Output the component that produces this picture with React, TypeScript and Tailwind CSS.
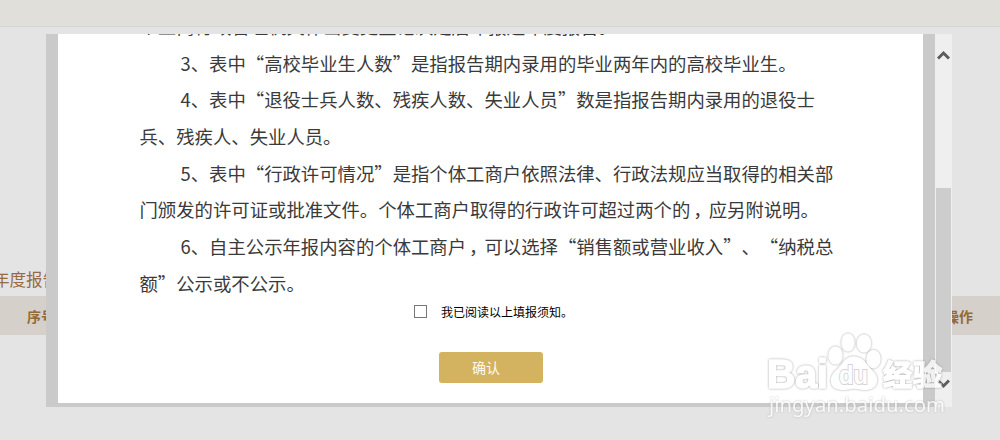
const lines = [
  { text: "个工商行政管理机关作出变更登记决定后年报送年度报告。", indent: false },
  { text: "3、表中“高校毕业生人数”是指报告期内录用的毕业两年内的高校毕业生。", indent: true },
  { text: "4、表中“退役士兵人数、残疾人数、失业人员”数是指报告期内录用的退役士", indent: true },
  { text: "兵、残疾人、失业人员。", indent: false },
  { text: "5、表中“行政许可情况”是指个体工商户依照法律、行政法规应当取得的相关部", indent: true },
  { text: "门颁发的许可证或批准文件。个体工商户取得的行政许可超过两个的，应另附说明。", indent: false },
  { text: "6、自主公示年报内容的个体工商户，可以选择“销售额或营业收入”、“纳税总", indent: true },
  { text: "额”公示或不公示。", indent: false },
];

// commas sit in the middle of their cell
const Line = ({ text }: { text: string }) => {
  const [head, tail] = text.split("，");
  if (!tail) return <>{text}</>;
  return (
    <>
      {head}
      <span className="inline-block translate-x-[3px]">，</span>
      {tail}
    </>
  );
};

const Arrow = ({ className }: { className: string }) => {
  return (
    <svg className={className} width="13" height="10" viewBox="0 0 13 10" fill="none" stroke="#5c5c5c" strokeWidth="3">
      <path d="M1 8.500L6.500 3L12 8.500" />
    </svg>
  );
};

const Watermark = () => {
  return (
    <svg
      className="absolute left-[760px] top-[325px]"
      width="195"
      height="95"
      viewBox="0 0 195 95"
      fill="#fff"
      fontFamily="'Liberation Sans', 'Noto Sans CJK SC', sans-serif"
    >
      <g className="opacity-75 [filter:drop-shadow(0_0_1px_#888)]" stroke="#fff" strokeWidth="1.5">
        <text x="7" y="63" fontSize="41" fontWeight="bold" textLength="61" lengthAdjust="spacingAndGlyphs">
          Bai
        </text>
        <ellipse cx="75.500" cy="30.500" rx="6.500" ry="8.500" />
        <ellipse cx="88" cy="17.500" rx="6" ry="8.500" />
        <ellipse cx="104" cy="18.500" rx="6.500" ry="8.500" />
        <ellipse cx="113.500" cy="34" rx="6.500" ry="8.500" />
        <path d="M94 32C104 32 106 41 112 46C119 52 118 63 108 64C102 65 99 63 94 63C89 63 86 65 80 64C70 63 69 53 76 46C83 41 84 32 94 32Z" />
        <text x="123" y="61" fontSize="29" fontWeight="bold" textLength="59">
          经验
        </text>
      </g>
      <text
        x="79"
        y="59"
        fontSize="25"
        fontWeight="bold"
        textLength="29"
        lengthAdjust="spacingAndGlyphs"
        stroke="#d6d6d6"
        strokeWidth="2"
        paintOrder="stroke"
      >
        du
      </text>
      <text
        className="opacity-80 [filter:drop-shadow(0_0_1px_#aaa)]"
        x="9"
        y="87"
        fontSize="20"
        textLength="176"
        lengthAdjust="spacingAndGlyphs"
        fontFamily="'Noto Sans', sans-serif"
      >
        jingyan.baidu.com
      </text>
    </svg>
  );
};

const App = () => {
  return (
    <div className="relative flex h-[440px] w-[1000px] flex-col overflow-hidden bg-[#e4e4e4] font-['Noto_Sans_CJK_SC',sans-serif]">
      <header className="h-[27px] shrink-0 border-b border-[#d6d5d0] bg-[#e0dfda]" />
      {/* report list behind the dialog */}
      <main className="pt-[238px]">
        <h2 className="-ml-[7px] flex h-[31px] items-center pb-0.5 text-[16.500px] text-[#976a43]">年度报告</h2>
        <div className="flex h-[39px] items-center justify-between bg-[#d6d0ca] px-[27px] pt-px text-[14px] font-bold text-[#936a36]">
          <span>序号</span>
          <span>操作</span>
        </div>
      </main>
      <div className="absolute left-[46px] top-[34px] flex h-[373px] w-[906px]">
        <div className="h-full w-[889px] border-x-[12px] border-b-4 border-[#cacaca] bg-white">
          <div className="h-[266px] overflow-hidden pl-[81.500px] text-[18.370px] leading-[36.700px] text-[#3a3a3a] [text-spacing-trim:space-all]">
            <div className="-mt-[26.200px]">
              {lines.map((line) => (
                <p key={line.text} className={line.indent ? "whitespace-nowrap pl-[41px]" : "whitespace-nowrap"}>
                  <Line text={line.text} />
                </p>
              ))}
            </div>
          </div>
          <label className="flex h-[23px] items-center pl-[356px] text-[12px] text-black">
            <span className="mr-3.5 size-[13px] border border-[#777] bg-white" />
            我已阅读以上填报须知。
          </label>
          <button className="ml-[381px] mt-[29px] block h-[31px] w-[104px] rounded-[3px] bg-[#d3b35f] pr-2.5 text-[14px] text-[#fffaf0]">
            确认
          </button>
        </div>
        <div className="flex h-full w-[17px] flex-col items-center bg-[#efefef]">
          <Arrow className="mt-4 shrink-0" />
          <div className="mt-32 h-[184px] w-[15px] shrink-0 bg-[#cdcdcd]" />
          <Arrow className="mt-[7px] shrink-0 rotate-180" />
        </div>
      </div>
      <Watermark />
    </div>
  );
};

export default App;
